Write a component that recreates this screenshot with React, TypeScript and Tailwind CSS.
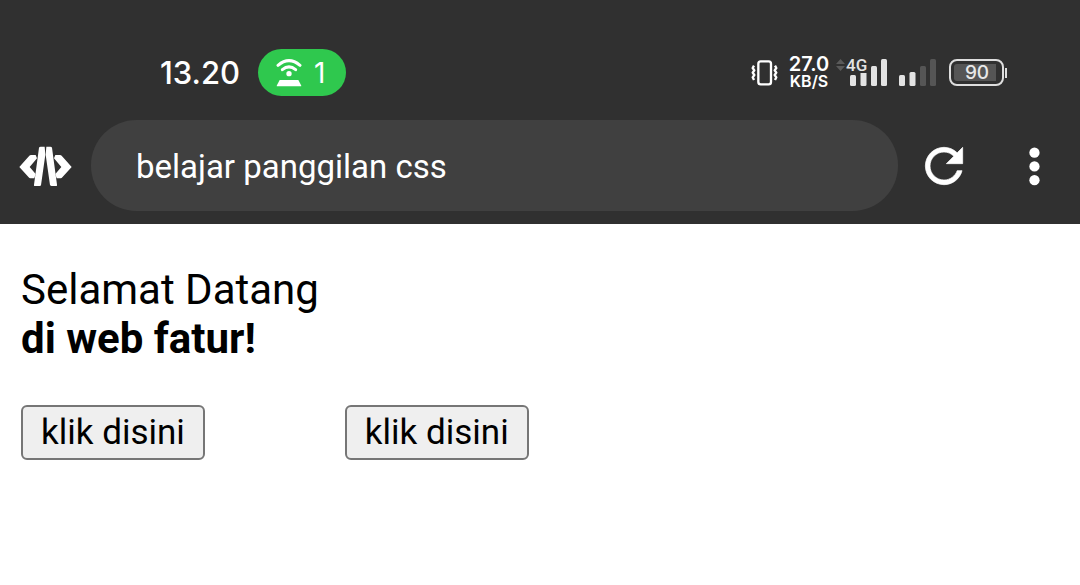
import React from "react";

function HotspotIcon() {
  return (
    <svg viewBox="0 0 78 84" className="h-7 w-[26px]" fill="none" stroke="white" aria-hidden="true">
      <path d="M6 19 Q39 -9 72 19" strokeWidth="9" strokeLinecap="round" />
      <path d="M19 32 Q39 15 59 32" strokeWidth="9" strokeLinecap="round" />
      <circle cx="39" cy="44" r="8" fill="white" stroke="none" />
      <path d="M11 63 H67 L76 80 Q76 82 74 82 H4 Q2 82 2 80 Z" fill="white" stroke="none" />
    </svg>
  );
}

function VibrateIcon() {
  return (
    <svg viewBox="0 0 81 78" className="h-[26px] w-[27px]" fill="none" stroke="white" aria-hidden="true">
      <rect x="22" y="4" width="38" height="69" rx="7" strokeWidth="7" />
      <path d="M9 17 L5 24 L10 31 L5 38 L10 45 L5 52 L9 60" strokeWidth="7" strokeLinejoin="round" />
      <path d="M72 17 L76 24 L71 31 L76 38 L71 45 L76 52 L72 60" strokeWidth="7" strokeLinejoin="round" />
    </svg>
  );
}

function DataArrows() {
  return (
    <svg viewBox="0 0 9 12" className="h-3 w-[9px] self-start" fill="#5a5a5a" aria-hidden="true">
      <path d="M4.500 0 L9 5 H0 Z M4.500 12 L9 7 H0 Z" />
    </svg>
  );
}

function SignalBars({ weak = false }: { weak?: boolean }) {
  const dim = weak ? "#555555" : "#e3e3e3";
  return (
    <svg viewBox="0 0 37 28" className="h-7 w-[37px]" fill="#e3e3e3" aria-hidden="true">
      <rect x="0" y="16" width="6" height="11" rx="1.500" />
      <rect x="10.500" y="13" width="6" height="14" rx="1.500" />
      <rect x="21" y="7" width="6" height="20" rx="1.500" fill={dim} />
      <rect x="31" y="0" width="6" height="27" rx="1.500" fill={dim} />
    </svg>
  );
}

function Battery() {
  return (
    <div className="flex items-center gap-px">
      <div className="h-[27px] w-[55px] rounded-lg border-2 border-[#dedede] p-[3px]">
        <div className="flex h-full w-[42px] items-center justify-center rounded-l-[3px] bg-[#555555] pl-1 font-[Inter] text-[19px] leading-none font-medium text-[#e8e8e8]">
          90
        </div>
      </div>
      <div className="h-[10px] w-[2px] bg-[#dedede]" />
    </div>
  );
}

function StatusBar() {
  return (
    <div className="flex h-[120px] items-center justify-between pt-[49px] pr-[73px] pb-6 pl-[160px] text-white">
      <div className="flex items-center gap-[18px]">
        <time className="w-20 font-[Inter] text-[31px] leading-none font-medium">13.20</time>
        <div className="flex h-[47px] w-[88px] items-center gap-3 rounded-full bg-[#2fc84e] pl-[18px]">
          <HotspotIcon />
          <span className="font-[Inter] text-[28px] leading-none">1</span>
        </div>
      </div>
      <div className="flex items-center">
        <VibrateIcon />
        <div className="ml-[10px] flex w-[42px] flex-col items-center font-[Inter]">
          <span className="text-xl leading-[17px] font-semibold">27.0</span>
          <span className="text-base leading-4 font-semibold">KB/S</span>
        </div>
        <div className="ml-[6px] flex h-7 items-center gap-[5px]">
          <DataArrows />
          <div className="relative h-7">
            <SignalBars />
            <span className="absolute -top-[2px] -left-1 bg-[#303030] font-[Roboto] text-[17px] leading-4 font-medium text-[#e3e3e3]">
              4G
            </span>
          </div>
        </div>
        <div className="ml-3 h-7">
          <SignalBars weak />
        </div>
        <div className="ml-[13px]">
          <Battery />
        </div>
      </div>
    </div>
  );
}

function CodeIcon() {
  return (
    <svg viewBox="0 0 159 120" className="h-10 w-[53px] shrink-0" fill="white" aria-hidden="true">
      <path d="M1 63 L31 29 Q33 27 36 27 H50 L54 37 L32 63 L50 84 L46 97 H34 Q31 97 29 94 Z" />
      <path d="M158 63 L128 29 Q126 27 123 27 H109 L105 37 L127 63 L109 84 L113 97 H125 Q128 97 130 94 Z" />
      <path d="M65 2 H77 L79 26 L66 118 Q65 120 62 120 H47 Q44 120 45 116 L60 5 Q61 2 65 2 Z" />
      <path d="M82 2 H94 Q98 2 99 5 L114 116 Q115 120 112 120 H98 Q95 120 93 117 L80 26 Z" />
    </svg>
  );
}

function Toolbar() {
  return (
    <div className="flex items-center pr-[18px] pb-[13px] pl-[19px]">
      <CodeIcon />
      <input
        aria-label="Page title"
        defaultValue="belajar panggilan css"
        className="ml-[19px] h-[91px] min-w-0 flex-1 rounded-full bg-[#404040] px-[45px] pt-[2px] text-[33px] text-white outline-none"
      />
      <button aria-label="Reload" className="ml-[18px]">
        <svg viewBox="0 0 24 24" className="size-14" fill="white" stroke="white" strokeWidth="0.300" aria-hidden="true">
          <path d="M17.650 6.350C16.200 4.900 14.210 4 12 4c-4.420 0-7.990 3.580-7.990 8s3.570 8 7.990 8c3.730 0 6.840-2.550 7.730-6h-2.080c-.82 2.330-3.040 4-5.650 4-3.310 0-6-2.690-6-6s2.690-6 6-6c1.660 0 3.140.69 4.220 1.780L13 11h7V4l-2.350 2.350z" />
        </svg>
      </button>
      <button aria-label="More options" className="ml-[34px]">
        <svg viewBox="0 0 24 24" className="size-14" fill="white" aria-hidden="true">
          <circle cx="12.200" cy="6.300" r="2.200" />
          <circle cx="12.200" cy="12.200" r="2.200" />
          <circle cx="12.200" cy="18.100" r="2.200" />
        </svg>
      </button>
    </div>
  );
}

function PageButton() {
  return (
    <button className="h-[55px] rounded-md border-2 border-[#767676] bg-[#efefef] px-[18px] text-[35px] leading-[41px]">
      klik disini
    </button>
  );
}

export default function App() {
  return (
    <div className="min-h-screen bg-white font-[Roboto,sans-serif] text-black">
      <header className="bg-[#303030]">
        <StatusBar />
        <Toolbar />
      </header>
      <main className="px-[21px] pt-[41px]">
        <p className="text-[42px] leading-[49px]">
          Selamat Datang
          <br />
          <b>di web fatur!</b>
        </p>
        <div className="mt-[42px] flex gap-[140px]">
          <PageButton />
          <PageButton />
        </div>
      </main>
    </div>
  );
}
